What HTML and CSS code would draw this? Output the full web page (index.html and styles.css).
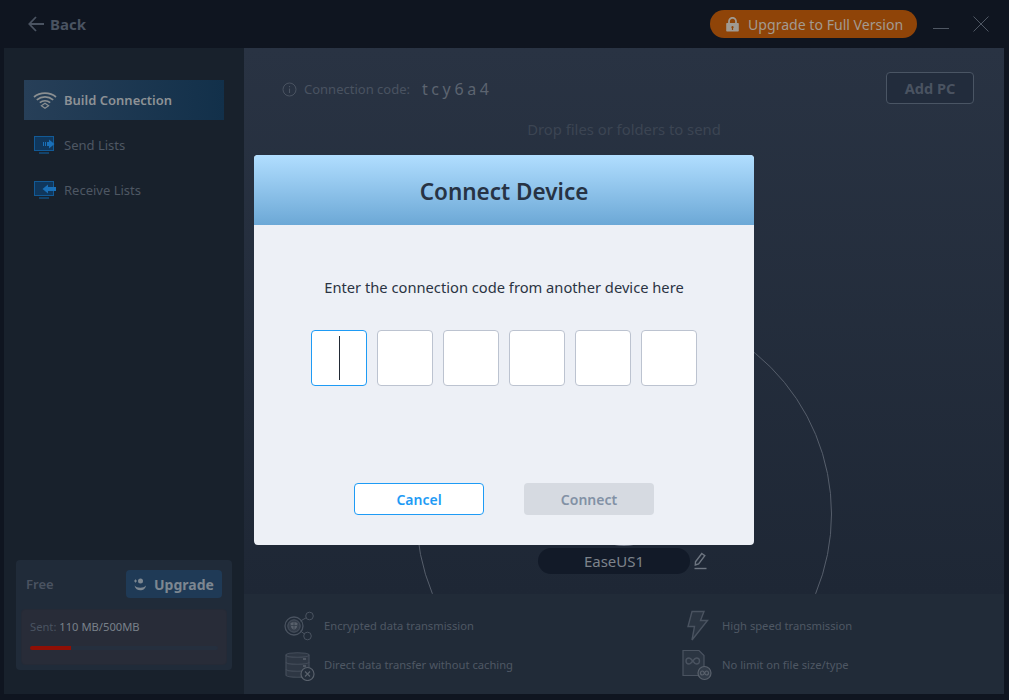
FILE: index.html
```html
<!DOCTYPE html>
<html lang="en">
<head>
<meta charset="utf-8">
<title>Connect Device</title>
<link rel="stylesheet" href="styles.css">
</head>
<body>
<div class="app">
  <header class="topbar">
    <div class="back">
      <svg class="back-icon" width="16" height="16" viewBox="0 0 16 16"><path d="M8 1 1.300 8 8 15M1.300 8H16" fill="none" stroke="#4a5361" stroke-width="1.800"/></svg>
      <span>Back</span>
    </div>
    <div class="top-actions">
      <div class="upgrade-pill">
        <svg width="13" height="15" viewBox="0 0 13 15"><path d="M3 6.500V4.300a3.500 3.500 0 0 1 7 0v2.200" fill="none" stroke="#a09a92" stroke-width="1.800"/><path fill-rule="evenodd" d="M1 6h11a.8.8 0 0 1 .8.800v7a.8.8 0 0 1-.8.800H1a.8.8 0 0 1-.8-.8v-7A.8.8 0 0 1 1 6Zm5.500 3a1.200 1.200 0 0 0-.6 2.200V13h1.200v-1.800A1.200 1.200 0 0 0 6.500 9Z" fill="#a09a92"/></svg>
        <span>Upgrade to Full Version</span>
      </div>
      <svg class="win-btn" width="16" height="16" viewBox="0 0 16 16"><path d="M0 12.500h16" stroke="#4f5763" stroke-width="1"/></svg>
      <svg class="win-btn" width="16" height="16" viewBox="0 0 16 16"><path d="M.500.500l15 15M15.500.500l-15 15" stroke="#4f5763" stroke-width="1"/></svg>
    </div>
  </header>
  <div class="body">
    <aside class="sidebar">
      <nav class="nav">
        <div class="nav-item active">
          <svg class="nav-icon" width="24" height="18" viewBox="0 0 24 18" fill="none" stroke="#8b8f91" stroke-width="1.700"><path d="M1 6C7 .8 17 .8 23 6"/><path d="M3.800 8.800c4.800-4 11.600-4 16.400 0"/><path d="M6.800 11.600c3-2.500 7.400-2.500 10.400 0"/><path d="M12 12.200l3.600 2.600L12 17.200l-3.600-2.400z" stroke-width="1.200"/></svg>
          <span>Build Connection</span>
        </div>
        <div class="nav-item">
          <svg class="nav-icon" width="24" height="18" viewBox="0 0 24 18"><rect x="1.500" y=".5" width="19" height="14" fill="#10375c" stroke="#125a96"/><path d="M6 17h10" stroke="#125a96" stroke-width="1.200"/><path d="M10 6h1v4h-1zM12 6h1v4h-1zM14 6h2V3.500L21.500 8 16 12.500V10h-2z" fill="#1a70b8"/></svg>
          <span>Send Lists</span>
        </div>
        <div class="nav-item">
          <svg class="nav-icon" width="24" height="18" viewBox="0 0 24 18"><rect x="1.500" y=".5" width="19" height="14" fill="#10375c" stroke="#125a96"/><path d="M6 17h10" stroke="#125a96" stroke-width="1.200"/><path d="M15 3.500V6h8v4h-8v2.500L9.500 8z" fill="#1a70b8"/></svg>
          <span>Receive Lists</span>
        </div>
      </nav>
      <section class="plan-card">
        <div class="plan-head">
          <span class="plan-name">Free</span>
          <div class="plan-upgrade">
            <svg width="14" height="14" viewBox="0 0 14 14"><circle cx="7.500" cy="4" r="2.500" fill="#7d8791"/><path d="M1.500 8.500c.8 3.500 3 4.800 5.800 4.800s5-1.300 5.700-4.800c-1.500 1.700-3 2.200-5.700 2.200S3 10.200 1.500 8.500Z" fill="#7d8791"/><path d="M2.500 2.500v3M1 4h3" stroke="#7d8791"/></svg>
            <span>Upgrade</span>
          </div>
        </div>
        <div class="usage">
          <div class="usage-text"><span class="usage-label">Sent:</span> 110 MB/500MB</div>
          <div class="track"><div class="fill"></div></div>
        </div>
      </section>
    </aside>
    <main class="main">
      <div class="stage">
        <div class="ring"></div>
        <div class="small-ring"></div>
        <div class="code-row">
          <svg width="15" height="15" viewBox="0 0 15 15" fill="none"><circle cx="7.500" cy="7.500" r="6.500" stroke="#4a5361"/><path d="M7.500 6.500v4.500M7.500 4v1.300" stroke="#4a5361" stroke-width="1.100"/></svg>
          <span class="code-label">Connection code:</span>
          <span class="code-value">tcy6a4</span>
          <div class="add-pc">Add PC</div>
        </div>
        <div class="drop-hint">Drop files or folders to send</div>
        <div class="device-row">
          <div class="device-name">EaseUS1</div>
          <svg class="pencil" width="14" height="18" viewBox="0 0 14 18"><path d="M8.800 1.500l3 2.200-6.200 8.300-3.300 1 .2-3.300z" fill="none" stroke="#6e7681" stroke-width="1.400"/><path d="M1.500 16.500h12" stroke="#6e7681" stroke-width="1.400"/></svg>
        </div>
      </div>
      <footer class="features">
        <div class="feature">
          <svg class="feat-icon" width="32" height="32" viewBox="0 0 32 32" fill="none" stroke="#4a5360"><circle cx="11" cy="16" r="9" stroke-width="1.300"/><circle cx="11" cy="16" r="6.200" fill="#343d4a" stroke="#4a5360"/><path d="M7.500 13l3.500-1.200 3.500 1.200c0 4-1.200 6-3.500 7-2.300-1-3.500-3-3.500-7z" fill="#59616c" stroke="none"/><path d="M11 11.800V20M7.600 15.500h6.800" stroke="#343d4a" stroke-width=".8"/><circle cx="26.500" cy="6" r="3.800"/><circle cx="24.500" cy="26" r="3.800"/><path d="M17.500 11l5.800-3.300M17.500 21l4 3"/></svg>
          <span>Encrypted data transmission</span>
        </div>
        <div class="feature">
          <svg class="feat-icon" width="32" height="32" viewBox="0 0 32 32" fill="none" stroke="#444d5a" stroke-width="1.200"><path d="M3 6c0-3 23-3 23 0v20c0 3-23 3-23 0z" fill="#2e3744"/><path d="M3 6c0 3 23 3 23 0M3 13c0 3 23 3 23 0M3 20c0 3 23 3 23 0"/><path d="M20 10h3M20 17h3" stroke="#59616c" stroke-width="1.500"/><circle cx="24.500" cy="25" r="6.500" fill="#242e3b" stroke="#59616c"/><path d="M22 22.500l5 5M27 22.500l-5 5" stroke="#59616c"/></svg>
          <span>Direct data transfer without caching</span>
        </div>
        <div class="feature">
          <svg class="feat-icon" width="32" height="32" viewBox="0 0 32 32" fill="none" stroke="#4a5360" stroke-width="1.400"><path d="M11 1.500h12l-3.500 9h7L11 30l2.500-13.500H7z" fill="#2b3542"/></svg>
          <span>High speed transmission</span>
        </div>
        <div class="feature">
          <svg class="feat-icon" width="32" height="32" viewBox="0 0 32 32" fill="none" stroke="#4a5360" stroke-width="1.200"><path d="M2 1.500h16l5 5V26.500H2z" fill="#2b3542"/><path d="M8 9a3 3 0 1 0 0 6c3 0 4.500-6 7.500-6a3 3 0 1 1 0 6c-3 0-4.500-6-7.500-6z" stroke-width="1.400"/><circle cx="23.500" cy="24" r="6.500" fill="#323c49" stroke="#59616c"/><path d="M21.500 22a2 2 0 1 0 0 4c2 0 2-4 4-4a2 2 0 1 1 0 4c-2 0-2-4-4-4z" stroke="#59616c"/></svg>
          <span>No limit on file size/type</span>
        </div>
      </footer>
    </main>
  </div>

  <div class="modal">
    <div class="modal-head">Connect Device</div>
    <div class="modal-body">
      <p class="prompt">Enter the connection code from another device here</p>
      <div class="code-boxes">
        <div class="box focus"><i class="caret"></i></div>
        <div class="box"></div>
        <div class="box"></div>
        <div class="box"></div>
        <div class="box"></div>
        <div class="box"></div>
      </div>
      <div class="modal-actions">
        <button class="btn cancel">Cancel</button>
        <button class="btn connect">Connect</button>
      </div>
    </div>
  </div>
</div>
</body>
</html>
```
FILE: styles.css
```css
* { box-sizing: border-box; }
html, body { margin: 0; height: 100%; }
body { font-family: "Noto Sans", "Open Sans", "Liberation Sans", sans-serif; background: #0f1520; overflow: hidden; }
.app { position: relative; width: 1009px; height: 700px; background: #0f1520; display: flex; flex-direction: column; padding: 0 5px 6px 4px; }

.topbar { height: 48px; flex: none; display: flex; align-items: center; justify-content: space-between; }
.back { display: flex; align-items: center; gap: 6px; margin-left: 24px; color: #4a5361; font-size: 15px; font-weight: 700; }
.back-icon { display: block; }
.top-actions { display: flex; align-items: center; margin-right: 15px; }
.upgrade-pill { width: 207px; height: 28px; border-radius: 14px; background: #8f4408; color: #a39a90; font-size: 14.100px; display: flex; align-items: center; gap: 9px; padding-left: 16px; margin-right: 16px; }
.win-btn { display: block; }
.win-btn + .win-btn { margin-left: 24px; }

.body { flex: 1; display: flex; min-height: 0; }
.sidebar { width: 240px; flex: none; background: #18212c; display: flex; flex-direction: column; padding: 32px 12px 24px; }
.nav { display: flex; flex-direction: column; gap: 5px; padding: 0 8px; }
.nav-item { height: 40px; display: flex; align-items: center; gap: 7px; padding-left: 9px; color: #4e5763; font-size: 13px; }
.nav-item.active { background: linear-gradient(90deg, #273f58, #12304a); color: #8d9296; font-weight: 600; }
.nav-icon { display: block; flex: none; }

.plan-card { margin-top: auto; height: 110px; background: #202b39; border-radius: 4px; padding: 10px 5px 5px; display: flex; flex-direction: column; }
.plan-head { height: 28px; display: flex; align-items: center; justify-content: space-between; padding: 0 5px; }
.plan-name { color: #4a5361; font-size: 13px; font-weight: 600; }
.plan-upgrade { width: 96px; height: 28px; background: #1f3a56; border-radius: 4px; display: flex; align-items: center; gap: 7px; padding-left: 7px; color: #7d8791; font-size: 14px; font-weight: 700; }
.usage { margin-top: auto; height: 56px; background: #282c38; border: 1px solid #252a36; border-radius: 4px; padding: 8px 8px 0; }
.usage-text { font-size: 11.200px; color: #79818a; line-height: 18px; }
.usage-label { color: #4a5361; }
.track { height: 4px; background: #252f3e; border-radius: 2px; margin-top: 10px; overflow: hidden; }
.fill { width: 41px; height: 100%; background: #8f0f05; }

.main { flex: 1; min-width: 0; display: flex; flex-direction: column; }
.stage { position: relative; flex: 1; min-height: 0; overflow: hidden; background: linear-gradient(180deg, #293343, #1e2735); padding: 24px 30px 0 38px; }
.ring { position: absolute; left: 172px; top: 258px; width: 416px; height: 416px; border: 1px solid #565e6b; border-radius: 50%; }
.small-ring { position: absolute; left: 355px; top: 470px; width: 50px; height: 28px; border-bottom: 2px solid #6a7180; border-radius: 50%; }
.code-row { display: flex; align-items: center; height: 34px; gap: 7px; position: relative; }
.code-label { font-size: 13px; color: #4a5361; }
.code-value { font-size: 16px; letter-spacing: 3.600px; color: #5c6470; margin-left: 5px; }
.add-pc { width: 88px; height: 32px; margin-left: auto; margin-top: -3px; border: 1px solid #4a5564; border-radius: 4px; background: #222c3c; color: #4a5361; font-size: 14.500px; font-weight: 700; display: flex; align-items: center; justify-content: center; }
.drop-hint { text-align: center; color: #3c4553; font-size: 14.800px; margin: 13px 0 0 -8px; line-height: 20px; }
.device-row { position: absolute; left: 294px; top: 500px; display: flex; align-items: center; gap: 3px; }
.device-name { width: 152px; height: 26px; border-radius: 13px; background: #121a28; color: #7d838b; font-size: 15px; display: flex; align-items: center; justify-content: center; }
.pencil { display: block; }

.features { height: 100px; flex: none; background: #212b38; display: grid; grid-template-columns: 398px 1fr; grid-auto-flow: column; grid-template-rows: 39px 39px; padding: 12px 0 0 39px; }
.feature { display: flex; align-items: center; gap: 9px; color: #4f5864; font-size: 11.200px; }
.feat-icon { display: block; flex: none; }

.modal { position: absolute; left: 254px; top: 155px; width: 500px; height: 390px; border-radius: 4px; overflow: hidden; background: #edf0f6; }
.modal-head { height: 70px; background: linear-gradient(180deg, #b1deff, #6ca8d6); color: #273344; font-size: 22.500px; font-weight: 600; display: flex; align-items: center; justify-content: center; padding-top: 2px; }
.modal-body { display: flex; flex-direction: column; align-items: center; padding-top: 51px; }
.prompt { margin: 0; color: #2b3443; font-size: 14.700px; line-height: 22px; height: 22px; }
.code-boxes { display: flex; gap: 10px; margin-top: 32px; }
.box { width: 56px; height: 56px; background: #fff; border: 1px solid #bcc3d0; border-radius: 4px; display: flex; align-items: center; justify-content: center; }
.box.focus { border-color: #1e9bf5; }
.caret { width: 1px; height: 44px; background: #222a35; display: block; }
.modal-actions { display: flex; gap: 40px; margin-top: 97px; }
.btn { width: 130px; height: 32px; border-radius: 4px; font-family: inherit; font-size: 14px; font-weight: 600; padding: 0; }
.cancel { background: #fff; border: 1px solid #1e9bf5; color: #1e9bf5; }
.connect { background: #d6dae1; border: none; color: #8291a5; }
```
